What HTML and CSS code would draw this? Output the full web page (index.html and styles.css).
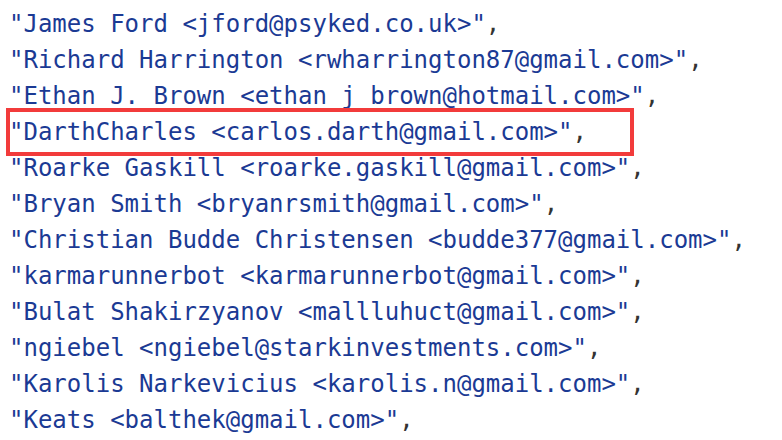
FILE: index.html
```html
<!DOCTYPE html>
<html>
<head>
<meta charset="utf-8">
<link rel="stylesheet" href="styles.css">
</head>
<body>
<div class="code">
<div class="line"><span class="str">"James Ford &lt;jford@psyked.co.uk&gt;"</span><span class="p">,</span></div>
<div class="line"><span class="str">"Richard Harrington &lt;rwharrington87@gmail.com&gt;"</span><span class="p">,</span></div>
<div class="line"><span class="str">"Ethan J. Brown &lt;ethan_j_brown@hotmail.com&gt;"</span><span class="p">,</span></div>
<div class="line"><span class="str">"DarthCharles &lt;carlos.darth@gmail.com&gt;"</span><span class="p">,</span></div>
<div class="line"><span class="str">"Roarke Gaskill &lt;roarke.gaskill@gmail.com&gt;"</span><span class="p">,</span></div>
<div class="line"><span class="str">"Bryan Smith &lt;bryanrsmith@gmail.com&gt;"</span><span class="p">,</span></div>
<div class="line"><span class="str">"Christian Budde Christensen &lt;budde377@gmail.com&gt;"</span><span class="p">,</span></div>
<div class="line"><span class="str">"karmarunnerbot &lt;karmarunnerbot@gmail.com&gt;"</span><span class="p">,</span></div>
<div class="line"><span class="str">"Bulat Shakirzyanov &lt;mallluhuct@gmail.com&gt;"</span><span class="p">,</span></div>
<div class="line"><span class="str">"ngiebel &lt;ngiebel@starkinvestments.com&gt;"</span><span class="p">,</span></div>
<div class="line"><span class="str">"Karolis Narkevicius &lt;karolis.n@gmail.com&gt;"</span><span class="p">,</span></div>
<div class="line"><span class="str">"Keats &lt;balthek@gmail.com&gt;"</span><span class="p">,</span></div>
<div class="highlight"></div>
</div>
</body>
</html>
```
FILE: styles.css
```css
html, body {
  margin: 0;
  padding: 0;
  background: #ffffff;
}
.code {
  position: relative;
  padding: 6px 0 0 9px;
  font-family: "DejaVu Sans Mono", monospace;
  font-size: 24px;
  line-height: 36px;
}
.line {
  white-space: pre;
}
.str {
  color: #1b3a94;
}
.p {
  color: #333333;
}
.highlight {
  position: absolute;
  left: 6px;
  top: 108px;
  width: 620px;
  height: 40px;
  border: 4px solid #f23b3b;
}
```
